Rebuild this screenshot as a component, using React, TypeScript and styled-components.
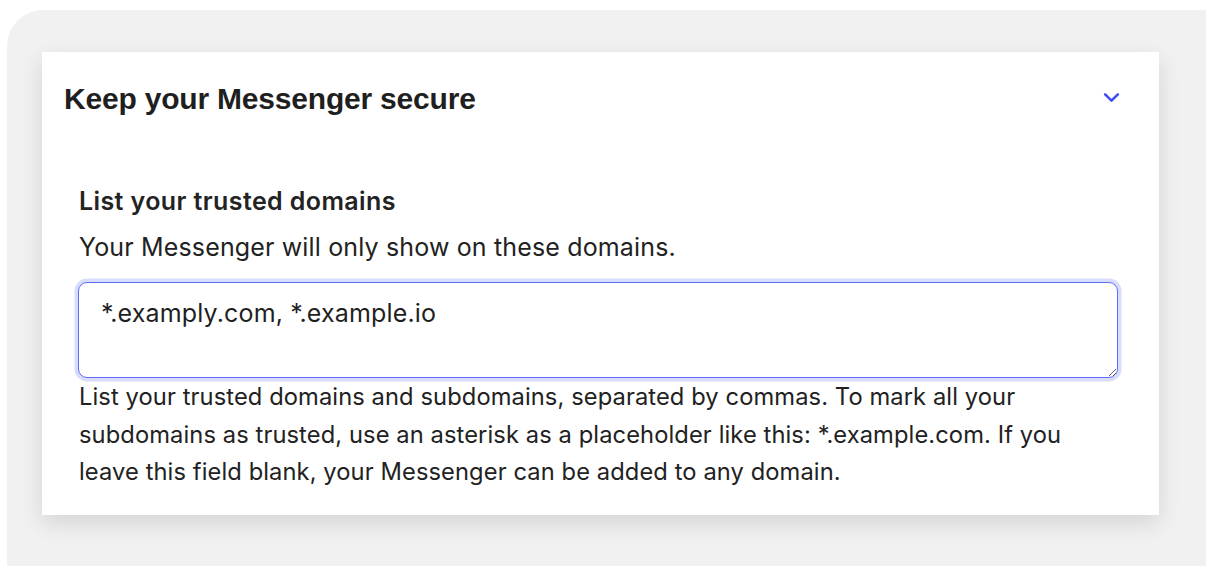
import { useEffect, useRef } from 'react'
import styled, { createGlobalStyle } from 'styled-components'

const GlobalStyle = createGlobalStyle`
  html, body {
    margin: 0;
    padding: 0;
    background: #ffffff;
    font-family: Inter, 'Liberation Sans', sans-serif;
    color: #222222;
  }
`

const DOMAINS = '*.examply.com, *.example.io'

const App = () => {
  const inputRef = useRef<HTMLTextAreaElement>(null)

  useEffect(() => {
    const el = inputRef.current
    if (el) {
      el.focus()
      el.setSelectionRange(DOMAINS.length, DOMAINS.length)
    }
  }, [])

  return (
    <>
      <GlobalStyle />
      <Panel>
        <Card>
          <CardHeader>
            <Title>Keep your Messenger secure</Title>
            <Chevron viewBox="0 0 16 10" aria-hidden="true">
              <path
                d="M2 2 L8 8 L14 2"
                fill="none"
                stroke="#3d4df2"
                strokeWidth="2.4"
                strokeLinecap="round"
                strokeLinejoin="round"
              />
            </Chevron>
          </CardHeader>
          <Section>
            <Label>List your trusted domains</Label>
            <Description>Your Messenger will only show on these domains.</Description>
            <DomainsInput ref={inputRef} defaultValue={DOMAINS} />
            <Hint>
              List your trusted domains and subdomains, separated by commas. To
              mark all your subdomains as trusted, use an asterisk as a
              placeholder like this: *.example.com. If you leave this field
              blank, your Messenger can be added to any domain.
            </Hint>
          </Section>
        </Card>
      </Panel>
    </>
  )
}

export default App

const Panel = styled.div`
  margin: 10px 0 0 7px;
  height: 556px;
  box-sizing: border-box;
  background: #f1f1f1;
  border-top-left-radius: 36px;
  padding: 42px 47px 0 35px;
`

const Card = styled.div`
  background: #ffffff;
  height: 463px;
  box-sizing: border-box;
  box-shadow: 0 8px 22px rgba(0, 0, 0, 0.12);
  padding: 30px 39px 0 22px;
`

const CardHeader = styled.div`
  display: flex;
  align-items: center;
  justify-content: space-between;
  height: 34px;
`

const Title = styled.h2`
  margin: 0;
  font-family: 'Liberation Sans', Arial, sans-serif;
  font-size: 30px;
  font-weight: 700;
  color: #1f1f1f;
  letter-spacing: -0.2px;
`

const Chevron = styled.svg`
  width: 17px;
  height: 11px;
  margin-top: -4px;
`

const Section = styled.div`
  padding: 0 0 0 15px;
  margin-top: 70px;
  font-size: 25px;
  letter-spacing: 0.15px;
`

const Label = styled.div`
  font-weight: 600;
  line-height: 30px;
  letter-spacing: 0.4px;
  color: #232323;
`

const Description = styled.div`
  line-height: 30px;
  margin-top: 16px;
  color: #222222;
`

const DomainsInput = styled.textarea`
  display: block;
  box-sizing: border-box;
  width: 1040px;
  height: 96px;
  margin: 20px 0 0 -1px;
  padding: 15px 22px;
  border: 1.5px solid #5e6ef4;
  border-radius: 9px;
  box-shadow: 0 0 0 3.5px #d9ddfd;
  outline: none;
  font-family: Inter, 'Liberation Sans', sans-serif;
  font-size: 25px;
  letter-spacing: 0.15px;
  line-height: 30px;
  color: #1f1f1f;
  caret-color: #111111;
  resize: vertical;
`

const Hint = styled.p`
  margin: 0;
  font-size: 23.7px;
  letter-spacing: 0.1px;
  line-height: 37.5px;
  color: #222222;
  max-width: 1000px;
`
